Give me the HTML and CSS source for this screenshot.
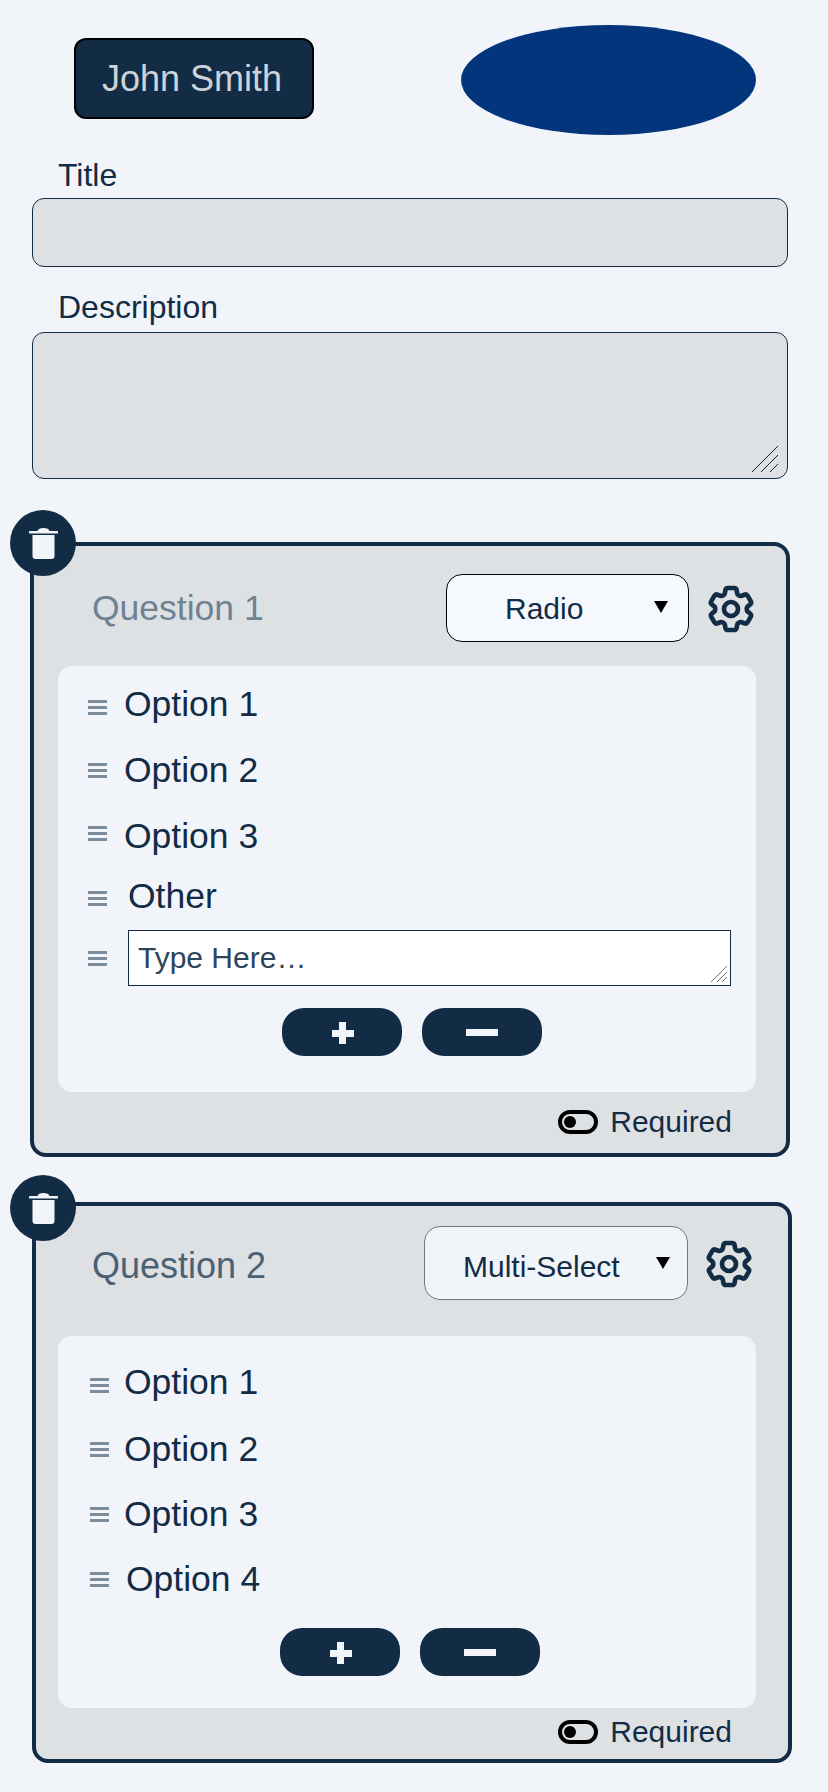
FILE: index.html
```html
<!DOCTYPE html>
<html>
    <head>
        <meta charset="utf-8">
        <title>Form Builder</title>
        <link rel="stylesheet" href="styles.css">
    </head>
    <body>
        <header class="top">
            <button class="user">John Smith</button>
            <div class="logo"></div>
        </header>

        <label class="label label-title">Title</label>
        <input class="field field-title" type="text">
        <label class="label label-desc">Description</label>
        <div class="desc-wrap">
            <textarea class="field field-desc"></textarea>
            <svg class="grip grip-desc" viewBox="0 0 26 26"><path d="M0 26 26 0M9 26 26 9M18 26 26 18"/></svg>
        </div>

        <section class="card card-one">
            <button class="trash"><svg viewBox="0 0 29 31"><path d="M8.500 3C9 1 11 0 14.500 0s5.500 1 6 3z"/><rect y="3" width="29" height="2.500" rx=".5"/><path d="M3.500 7h22v21a3 3 0 0 1-3 3h-16a3 3 0 0 1-3-3z"/></svg></button>
            <div class="head">
                <h2 class="question question-faded">Question 1</h2>
                <div class="select-wrap select-radio">
                    <select class="select"><option>Radio</option></select>
                </div>
                <svg class="gear" viewBox="0 0 24 24"><path d="M9.594 3.940c.09-.542.56-.94 1.110-.94h2.593c.55 0 1.020.398 1.110.94l.213 1.281c.063.374.313.686.645.87.074.04.147.083.22.127.325.196.72.257 1.075.124l1.217-.456a1.125 1.125 0 0 1 1.370.49l1.296 2.247a1.125 1.125 0 0 1-.26 1.431l-1.003.827c-.293.241-.438.613-.43.992a7.723 7.723 0 0 1 0 .255c-.008.378.137.75.43.991l1.004.827c.424.35.534.955.26 1.430l-1.298 2.247a1.125 1.125 0 0 1-1.369.491l-1.217-.456c-.355-.133-.75-.072-1.076.124a6.470 6.470 0 0 1-.22.128c-.331.183-.581.495-.644.869l-.213 1.281c-.09.543-.56.94-1.110.94h-2.594c-.55 0-1.019-.398-1.110-.94l-.213-1.281c-.062-.374-.312-.686-.644-.87a6.520 6.520 0 0 1-.22-.127c-.325-.196-.72-.257-1.076-.124l-1.217.456a1.125 1.125 0 0 1-1.369-.49l-1.297-2.247a1.125 1.125 0 0 1 .26-1.431l1.004-.827c.292-.24.437-.613.43-.991a6.932 6.932 0 0 1 0-.255c.007-.38-.138-.751-.43-.992l-1.004-.827a1.125 1.125 0 0 1-.26-1.430l1.297-2.247a1.125 1.125 0 0 1 1.370-.491l1.216.456c.356.133.751.072 1.076-.124.072-.044.146-.086.22-.128.332-.183.582-.495.644-.869l.214-1.280Z"/><circle cx="12" cy="12" r="3"/></svg>
            </div>
            <div class="panel panel-one">
                <div class="row"><span class="handle handle-low"><i></i><i></i><i></i></span><span class="option">Option 1</span></div>
                <div class="row"><span class="handle"><i></i><i></i><i></i></span><span class="option">Option 2</span></div>
                <div class="row"><span class="handle handle-high"><i></i><i></i><i></i></span><span class="option">Option 3</span></div>
                <div class="row row-other"><span class="handle handle-low"><i></i><i></i><i></i></span><span class="option option-other">Other</span></div>
                <div class="row row-text">
                    <span class="handle"><i></i><i></i><i></i></span>
                    <div class="type-wrap">
                        <textarea class="type-here" placeholder="Type Here…"></textarea>
                        <svg class="grip grip-type" viewBox="0 0 16 16"><path d="M0 16 16 0M6 16 16 6M11 16 16 11"/></svg>
                    </div>
                </div>
                <div class="buttons buttons-one">
                    <button class="pill"><span class="plus"></span></button>
                    <button class="pill"><span class="minus"></span></button>
                </div>
            </div>
            <div class="required">
                <span class="toggle"><i></i></span>
                <span>Required</span>
            </div>
        </section>

        <section class="card card-two">
            <button class="trash"><svg viewBox="0 0 29 31"><path d="M8.500 3C9 1 11 0 14.500 0s5.500 1 6 3z"/><rect y="3" width="29" height="2.500" rx=".5"/><path d="M3.500 7h22v21a3 3 0 0 1-3 3h-16a3 3 0 0 1-3-3z"/></svg></button>
            <div class="head">
                <h2 class="question">Question 2</h2>
                <div class="select-wrap select-multi">
                    <select class="select"><option>Multi-Select</option></select>
                </div>
                <svg class="gear" viewBox="0 0 24 24"><path d="M9.594 3.940c.09-.542.56-.94 1.110-.94h2.593c.55 0 1.020.398 1.110.94l.213 1.281c.063.374.313.686.645.87.074.04.147.083.22.127.325.196.72.257 1.075.124l1.217-.456a1.125 1.125 0 0 1 1.370.49l1.296 2.247a1.125 1.125 0 0 1-.26 1.431l-1.003.827c-.293.241-.438.613-.43.992a7.723 7.723 0 0 1 0 .255c-.008.378.137.75.43.991l1.004.827c.424.35.534.955.26 1.430l-1.298 2.247a1.125 1.125 0 0 1-1.369.491l-1.217-.456c-.355-.133-.75-.072-1.076.124a6.470 6.470 0 0 1-.22.128c-.331.183-.581.495-.644.869l-.213 1.281c-.09.543-.56.94-1.110.94h-2.594c-.55 0-1.019-.398-1.110-.94l-.213-1.281c-.062-.374-.312-.686-.644-.87a6.520 6.520 0 0 1-.22-.127c-.325-.196-.72-.257-1.076-.124l-1.217.456a1.125 1.125 0 0 1-1.369-.49l-1.297-2.247a1.125 1.125 0 0 1 .26-1.431l1.004-.827c.292-.24.437-.613.43-.991a6.932 6.932 0 0 1 0-.255c.007-.38-.138-.751-.43-.992l-1.004-.827a1.125 1.125 0 0 1-.26-1.430l1.297-2.247a1.125 1.125 0 0 1 1.370-.491l1.216.456c.356.133.751.072 1.076-.124.072-.044.146-.086.22-.128.332-.183.582-.495.644-.869l.214-1.280Z"/><circle cx="12" cy="12" r="3"/></svg>
            </div>
            <div class="panel panel-two">
                <div class="row"><span class="handle handle-low"><i></i><i></i><i></i></span><span class="option">Option 1</span></div>
                <div class="row row-down"><span class="handle"><i></i><i></i><i></i></span><span class="option">Option 2</span></div>
                <div class="row row-up"><span class="handle"><i></i><i></i><i></i></span><span class="option">Option 3</span></div>
                <div class="row row-up"><span class="handle"><i></i><i></i><i></i></span><span class="option option-four">Option 4</span></div>
                <div class="buttons buttons-two">
                    <button class="pill"><span class="plus"></span></button>
                    <button class="pill"><span class="minus"></span></button>
                </div>
            </div>
            <div class="required required-two">
                <span class="toggle"><i></i></span>
                <span>Required</span>
            </div>
        </section>
    </body>
</html>
```

FILE: styles.css
```css
* {
    box-sizing: border-box;
}
body {
    margin: 0;
    height: 1792px;
    overflow: hidden;
    background-color: #f1f5f9;
    color: #132c46;
    font-family: "Liberation Sans", Arial, sans-serif;
}
button {
    font-family: inherit;
    padding: 0;
}

.top {
    display: flex;
    align-items: flex-start;
    padding: 25px 0 0 74px;
    height: 135px;
}
.user {
    width: 240px;
    height: 81px;
    margin-top: 13px;
    padding-right: 4px;
    border: 2px solid #000;
    border-radius: 12px;
    background-color: #132c46;
    color: #ced3d8;
    font-size: 36px;
}
.logo {
    width: 295px;
    height: 110px;
    margin-left: 147px;
    border-radius: 50%;
    background-color: #03357c;
}

.label {
    display: block;
    margin-left: 58px;
    font-size: 32px;
    line-height: 34px;
}
.label-title {
    margin-top: 23px;
    margin-bottom: 6px;
}
.label-desc {
    margin-top: 23px;
    margin-bottom: 8px;
}
.field {
    display: block;
    width: 756px;
    margin-left: 32px;
    border: 1px solid #132c46;
    border-radius: 12px;
    background-color: #dee1e4;
    outline: none;
    resize: none;
}
.field-title {
    height: 69px;
}
.field-desc {
    height: 147px;
}
.desc-wrap {
    position: relative;
}
.grip {
    position: absolute;
    fill: none;
    stroke: #222;
    stroke-width: 1;
}
.grip-desc {
    left: 752px;
    top: 114px;
    width: 26px;
    height: 26px;
}
.grip-type {
    right: 4px;
    bottom: 4px;
    width: 16px;
    height: 16px;
    stroke: #777;
}

.card {
    position: relative;
    border: 4px solid #132c46;
    border-radius: 16px;
    background-color: #dee1e4;
}
.card-one {
    width: 760px;
    height: 615px;
    margin: 63px 0 0 30px;
}
.card-two {
    width: 760px;
    height: 561px;
    margin: 45px 0 0 32px;
}
.trash {
    position: absolute;
    left: -24px;
    top: -36px;
    display: flex;
    align-items: center;
    justify-content: center;
    width: 66px;
    height: 66px;
    border: none;
    border-radius: 50%;
    background-color: #132c46;
}
.card-two .trash {
    left: -26px;
    top: -31px;
}
.trash svg {
    width: 29px;
    height: 31px;
    fill: #f1f5f9;
}

.head {
    display: flex;
    align-items: center;
    padding: 28px 0 0 58px;
}
.card-two .head {
    padding: 20px 0 0 56px;
}
.question {
    flex: 1;
    margin: 0;
    font-size: 35.5px;
    font-weight: 400;
    color: #4a6075;
}
.card-two .question {
    padding-top: 5px;
    font-size: 36px;
}
.question-faded {
    color: #6f8292;
}
.select-wrap {
    position: relative;
}
.select-wrap::after {
    content: "";
    position: absolute;
    top: 50%;
    right: 21px;
    margin-top: -7px;
    border-left: 7px solid transparent;
    border-right: 7px solid transparent;
    border-top: 12px solid #000;
}
.select-multi::after {
    right: 18px;
    margin-top: -6px;
}
.select {
    display: block;
    appearance: none;
    border-radius: 16px;
    color: #132c46;
    font-family: inherit;
    font-size: 30px;
}
.select-radio .select {
    width: 243px;
    height: 68px;
    padding-left: 58px;
    border: 1px solid #000;
    background-color: #f5f8fd;
}
.select-multi .select {
    width: 264px;
    height: 74px;
    padding-top: 6px;
    padding-left: 38px;
    border: 1px solid #777;
    background-color: #f1f5f9;
}
.gear {
    width: 56px;
    height: 56px;
    margin-top: 2px;
    margin-left: 14px;
    margin-right: 27px;
    fill: none;
    stroke: #132c46;
    stroke-width: 2;
}
.card-two .gear {
    margin-left: 13px;
    margin-right: 31px;
}

.panel {
    margin: 24px 30px 0 24px;
    border-radius: 14px;
    background-color: #f1f5f9;
}
.card-two .panel {
    margin: 36px 32px 0 22px;
}
.panel-one {
    height: 426px;
    padding-top: 5px;
}
.panel-two {
    height: 372px;
    padding-top: 13px;
}
.row {
    display: flex;
    align-items: center;
    height: 66px;
    padding-left: 30px;
}
.card-two .row {
    padding-left: 32px;
}
.row-other {
    height: 50px;
    margin-top: 2px;
}
.row-text {
    height: 56px;
    margin-top: 9px;
}
.row-down {
    margin-top: 1px;
}
.row-up {
    margin-top: -1px;
}
.handle {
    display: flex;
    flex-direction: column;
    gap: 3px;
    width: 19px;
    margin-right: 17px;
}
.card-two .handle {
    margin-right: 15px;
}
.handle i {
    display: block;
    height: 3px;
    background-color: #7d8d9d;
}
.handle-low {
    margin-top: 6px;
}
.row-other .handle-low {
    margin-top: 4px;
}
.handle-high {
    margin-bottom: 6px;
}
.option {
    font-size: 35.5px;
}
.option-other {
    margin-left: 4px;
}
.option-four {
    margin-left: 2px;
}
.type-wrap {
    position: relative;
    width: 603px;
    height: 56px;
    margin-left: 4px;
}
.type-here {
    display: block;
    width: 100%;
    height: 100%;
    padding: 10px 9px 0;
    border: 1px solid #132c46;
    border-radius: 0;
    background-color: #fff;
    color: #132c46;
    font-family: inherit;
    font-size: 30px;
    outline: none;
    resize: none;
}
.type-here::placeholder {
    color: #2e445a;
    opacity: 1;
}

.buttons {
    display: flex;
    justify-content: center;
    gap: 20px;
}
.buttons-one {
    margin-top: 22px;
    padding-left: 10px;
}
.buttons-two {
    margin-top: 16px;
    padding-left: 6px;
}
.pill {
    display: flex;
    align-items: center;
    justify-content: center;
    width: 120px;
    height: 48px;
    border: none;
    border-radius: 22px;
    background-color: #132c46;
}
.plus {
    width: 22px;
    height: 22px;
    margin: 2px 0 0 1px;
    background:
        linear-gradient(#f1f5f9, #f1f5f9) center / 22px 7px no-repeat,
        linear-gradient(#f1f5f9, #f1f5f9) center / 7px 22px no-repeat;
}
.minus {
    width: 32px;
    height: 7px;
    background-color: #f1f5f9;
}

.required {
    display: flex;
    align-items: center;
    justify-content: flex-end;
    gap: 12px;
    height: 34px;
    margin-top: 13px;
    padding-right: 54px;
    font-size: 30px;
}
.required-two {
    margin-top: 7px;
    padding-right: 56px;
}
.toggle {
    display: flex;
    align-items: center;
    width: 40px;
    height: 24px;
    padding-left: 2px;
    border: 4px solid #000;
    border-radius: 12px;
}
.toggle i {
    display: block;
    width: 12px;
    height: 12px;
    border-radius: 50%;
    background-color: #000;
}
```
